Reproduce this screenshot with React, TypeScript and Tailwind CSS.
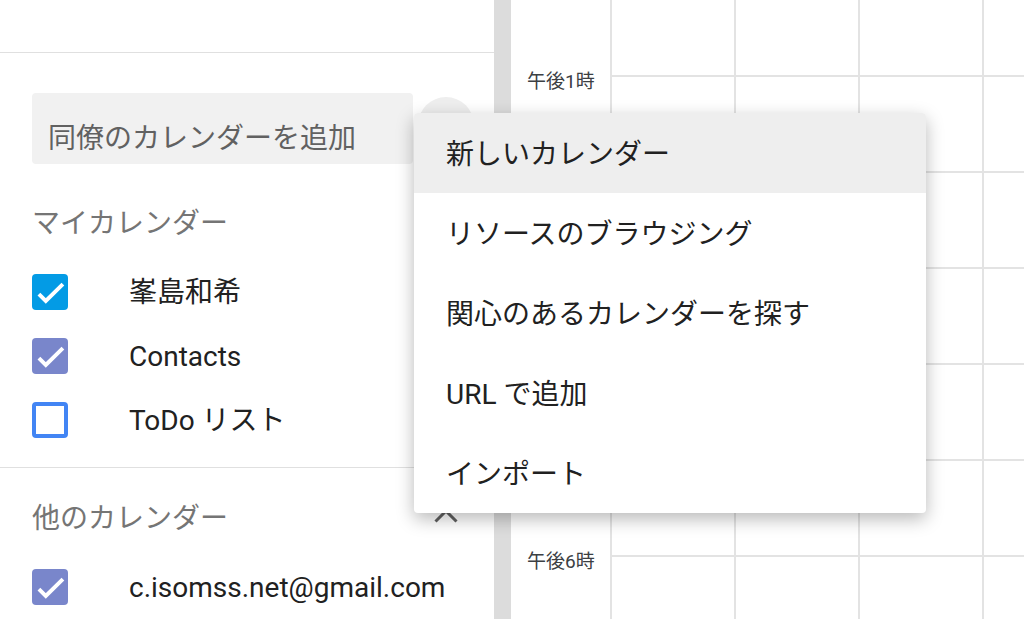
const font = { fontFamily: 'Roboto, "Noto Sans CJK JP", sans-serif' };

const myCalendars = [
  { name: "峯島和希", color: "bg-[#039be5]", checked: true },
  { name: "Contacts", color: "bg-[#7986cb]", checked: true },
  { name: "ToDo リスト", color: "border-[#4285f4]", checked: false },
];

const menuItems = [
  "新しいカレンダー",
  "リソースのブラウジング",
  "関心のあるカレンダーを探す",
  "URL で追加",
  "インポート",
];

const Check = () => (
  <svg viewBox="0 0 24 24" className="w-9 h-9" fill="none">
    <path d="M4.6 12.2 9.2 16.8 20.6 5.6" stroke="white" strokeWidth="2.6" transform="translate(0 1.2)" />
  </svg>
);

const CalendarRow = ({ name, color, checked }: { name: string; color: string; checked: boolean }) => (
  <div className="flex items-center h-16 pl-8">
    {checked ? (
      <div className={`w-9 h-9 rounded-[4px] ${color} flex items-center justify-center`}>
        <Check />
      </div>
    ) : (
      <div className={`w-9 h-9 rounded-[4px] border-4 ${color} bg-white`}></div>
    )}
    <span className="ml-[61px] pt-[2px] text-[28px] leading-[28px] text-[#212121]">{name}</span>
  </div>
);

const Sidebar = () => (
  <div className="w-[494px] h-full flex-none flex flex-col">
    <div className="h-[53px] border-b border-[#e0e0e0] flex-none"></div>
    <div className="flex items-start mt-[40px] pl-8">
      <div className="w-[381px] h-[71px] bg-[#f1f1f1] rounded-[4px] pl-4 pt-[32px] text-[28px] leading-[28px] text-[#616161]">
        同僚のカレンダーを追加
      </div>
      <div className="ml-[5px] mt-1 w-14 h-14 rounded-full bg-[#eeeeee]"></div>
    </div>
    <div className="mt-[29px] h-14 flex items-center pl-8 pt-2 text-[28px] text-[#757575]">
      マイカレンダー
    </div>
    <div className="mt-3">
      {myCalendars.map((c) => (
        <CalendarRow key={c.name} {...c} />
      ))}
    </div>
    <div className="mt-[15px] h-px bg-[#e0e0e0]"></div>
    <div className="mt-5 h-14 flex items-center justify-between pl-8 pr-[36px] pt-2 text-[28px] text-[#757575]">
      <span>他のカレンダー</span>
      <svg viewBox="0 0 24 14" className="w-6 h-[14px] -mt-[6px]" fill="none">
        <path d="M1.5 12.5 12 2 22.5 12.5" stroke="#616161" strokeWidth="3" />
      </svg>
    </div>
    <div className="mt-[13px]">
      <CalendarRow name="c.isomss.net@gmail.com" color="bg-[#7986cb]" checked />
    </div>
  </div>
);

const Grid = () => (
  <div className="flex-1 flex h-full overflow-hidden">
    <div className="w-[101px] flex-none border-r-2 border-[#e3e3e3] pt-[68px] pl-4 text-[19px] leading-[28px] text-[#3c4043]">
      <div className="h-[480px]">午後1時</div>
      <div>午後6時</div>
    </div>
    {[0, 1, 2, 3].map((col) => (
      <div key={col} className="w-[124px] flex-none border-r-2 border-[#e3e3e3]">
        <div className="h-[77px] border-b-2 border-[#e3e3e3]"></div>
        {[0, 1, 2, 3, 4, 5].map((r) => (
          <div key={r} className="h-[96px] border-b-2 border-[#e3e3e3]"></div>
        ))}
      </div>
    ))}
  </div>
);

export default function App() {
  return (
    <div className="relative w-[1024px] h-[619px] overflow-hidden bg-white flex" style={font}>
      <Sidebar />
      <div className="w-[17px] flex-none bg-[#dcdcdc]"></div>
      <Grid />
      <div className="absolute left-[414px] top-[113px] w-[512px] bg-white rounded-[4px] shadow-[0_6px_18px_rgba(0,0,0,0.28)] overflow-hidden">
        {menuItems.map((m, i) => (
          <div
            key={m}
            className={`h-20 flex items-center pl-8 pt-1 text-[28px] text-[#212121] ${i === 0 ? "bg-[#eeeeee]" : ""}`}
          >
            {m}
          </div>
        ))}
      </div>
    </div>
  );
}
